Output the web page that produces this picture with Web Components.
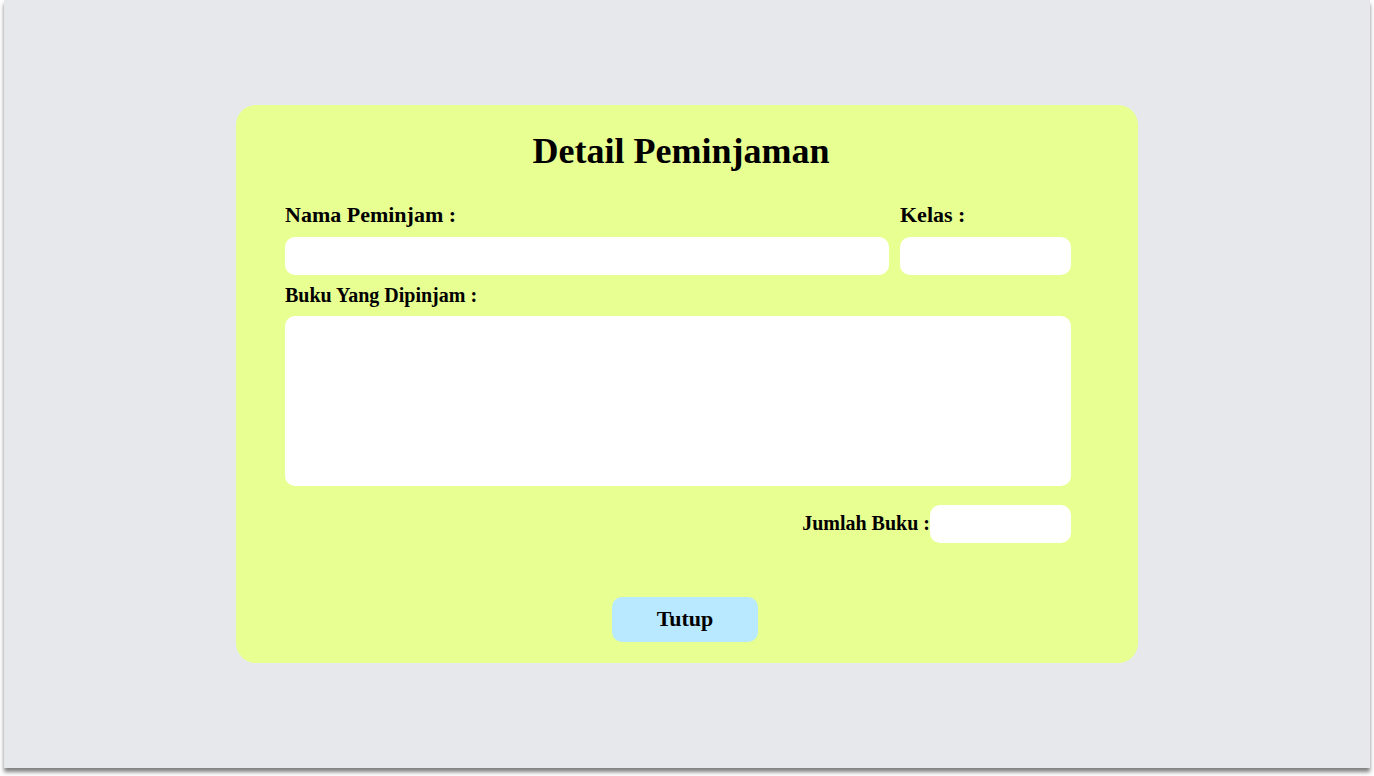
<!DOCTYPE html>
<html lang="id">
<head>
<meta charset="utf-8">
<meta name="viewport" content="width=device-width, initial-scale=1">
<title>Detail Peminjaman</title>
<style>
html, body { margin: 0; min-height: 100%; background: #fff; }
body { font-family: "Liberation Serif", "Times New Roman", serif; font-weight: 700; color: #000; }
</style>
</head>
<body>
<page-frame>
  <loan-card heading="Detail Peminjaman">
    <form-row>
      <text-field class="grow" label="Nama Peminjam :"></text-field>
      <text-field class="narrow" label="Kelas :"></text-field>
    </form-row>
    <text-field label="Buku Yang Dipinjam :" kind="area"></text-field>
    <text-field label="Jumlah Buku :" kind="inline"></text-field>
    <action-button slot="action">Tutup</action-button>
  </loan-card>
</page-frame>
<script>
const mount = (el, html) => { el.attachShadow({ mode: "open" }).innerHTML = html; };

customElements.define("page-frame", class extends HTMLElement {
  constructor() {
    super();
    mount(this, `<style>
      :host { display: flex; align-items: center; justify-content: center; box-sizing: border-box;
        min-height: calc(100vh - 8px); margin: 0 4px 8px; padding: 24px;
        background: #e6e8eb; box-shadow: 0 4px 4px rgba(0,0,0,.5); }
      main { width: 100%; max-width: 902px; }
    </style><main><slot></slot></main>`);
  }
});

customElements.define("loan-card", class extends HTMLElement {
  constructor() {
    super();
    mount(this, `<style>
      :host { display: block; box-sizing: border-box; padding: 26px 0 21px;
        background: #e8ff92; border-radius: 20px; }
      .body { padding: 0 67px 0 49px; }
      h1 { margin: 0 0 26px; padding-left: 6px; font-size: 36px; line-height: 40px; font-weight: inherit; text-align: center; }
      footer { display: flex; justify-content: center; margin-top: 54px; padding-right: 4px; }
    </style><div class="body"><h1></h1><slot></slot></div><footer><slot name="action"></slot></footer>`);
  }
  connectedCallback() { this.shadowRoot.querySelector("h1").textContent = this.getAttribute("heading"); }
});

customElements.define("form-row", class extends HTMLElement {
  constructor() {
    super();
    mount(this, `<style>
      :host { display: flex; gap: 11px; }
      ::slotted(.grow) { flex: 1; min-width: 0; }
      ::slotted(.narrow) { flex: 0 1 171px; min-width: 0; }
    </style><slot></slot>`);
  }
});

customElements.define("text-field", class extends HTMLElement {
  constructor() {
    super();
    mount(this, `<style>
      :host { display: flex; flex-direction: column; }
      label { padding-bottom: 4px; font-size: 22px; line-height: 36px; white-space: nowrap; }
      input, textarea { display: block; box-sizing: border-box; width: 100%; height: 38px; margin: 0;
        padding: 4px 12px; border: 0; border-radius: 10px; background: #fff; font: inherit; color: inherit; resize: none; }
      textarea { height: 170px; }
      :host([kind]) label { padding-bottom: 1px; font-size: 20px; }
      :host([kind="area"]) label { line-height: 40px; }
      :host([kind="inline"]) { flex-direction: row; align-items: center; justify-content: flex-end; margin-top: 19px; }
      :host([kind="inline"]) label { padding-bottom: 2px; }
      :host([kind="inline"]) input { width: 141px; }
    </style><label for="control"></label>`);
  }
  connectedCallback() {
    const label = this.shadowRoot.querySelector("label");
    if (label.textContent) return;
    label.textContent = this.getAttribute("label");
    const control = document.createElement(this.getAttribute("kind") === "area" ? "textarea" : "input");
    control.id = "control";
    this.shadowRoot.append(control);
  }
});

customElements.define("action-button", class extends HTMLElement {
  constructor() {
    super();
    mount(this, `<style>
      :host { display: block; }
      button { display: block; width: 146px; height: 45px; padding: 0 0 2px; border: 0; border-radius: 10px;
        background: #b9e9ff; color: inherit; font: inherit; font-size: 22px; cursor: pointer; }
    </style><button type="button"><slot></slot></button>`);
  }
});
</script>
</body>
</html>
